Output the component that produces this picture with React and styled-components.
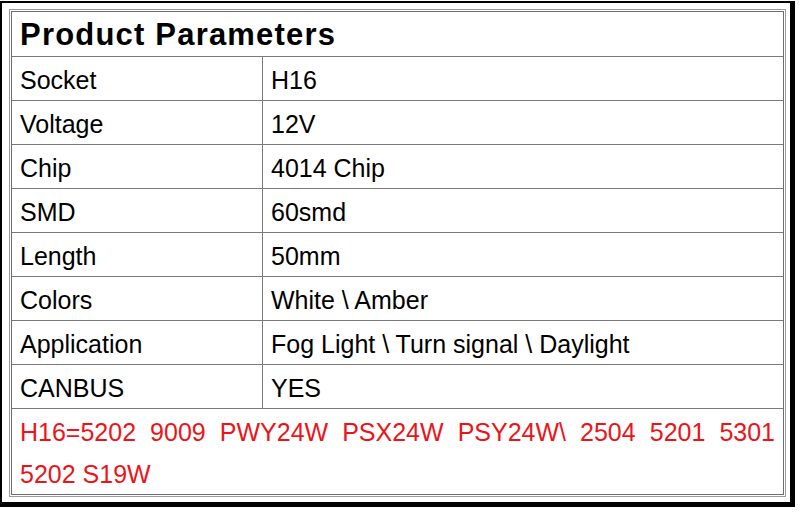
import React from 'react';
import styled, { createGlobalStyle } from 'styled-components';

const GlobalStyle = createGlobalStyle`
  html, body {
    margin: 0;
    padding: 0;
    background: #ffffff;
  }
  body {
    font-family: "Liberation Sans", Arial, sans-serif;
  }
`;

const Frame = styled.div`
  box-sizing: border-box;
  width: 795px;
  height: 506px;
  margin-top: 1px;
  background: #ffffff;
  border-style: solid;
  border-color: #000000;
  border-width: 2px 5px 5px 2px;
  padding: 6px 4px 5px 7px;
`;

const Table = styled.div`
  box-sizing: border-box;
  height: 100%;
  border: 1px solid #9a9a9a;
  padding: 1px;
`;

const Grid = styled.div`
  box-sizing: border-box;
  height: 100%;
  border: 1px solid #6e6e6e;
  display: grid;
  grid-template-columns: 251px 1fr;
  grid-template-rows: 45px repeat(8, 44px) 1fr;
`;

const TitleCell = styled.div`
  grid-column: 1 / -1;
  box-sizing: border-box;
  border-bottom: 1px solid #7a7a7a;
  display: flex;
  align-items: center;
  padding: 2px 8px 0;
  font-size: 31px;
  font-weight: bold;
  letter-spacing: 1.2px;
  color: #000000;
`;

const Cell = styled.div`
  box-sizing: border-box;
  border-bottom: 1px solid #7a7a7a;
  border-right: ${(p) => (p.$label ? '1px solid #7a7a7a' : 'none')};
  display: flex;
  align-items: center;
  padding: 3px 8px 0 8px;
  font-size: 25px;
  color: #000000;
  white-space: nowrap;
`;

const NoteCell = styled.div`
  grid-column: 1 / -1;
  box-sizing: border-box;
  padding: 2px 8px 0 8px;
  font-size: 25px;
  line-height: 42px;
  color: #ec1419;
  text-align: justify;
`;

const params = [
  ['Socket', 'H16'],
  ['Voltage', '12V'],
  ['Chip', '4014 Chip'],
  ['SMD', '60smd'],
  ['Length', '50mm'],
  ['Colors', 'White \\ Amber'],
  ['Application', 'Fog Light \\ Turn signal \\ Daylight'],
  ['CANBUS', 'YES'],
];

export default function App() {
  return (
    <>
      <GlobalStyle />
      <Frame>
        <Table>
          <Grid>
            <TitleCell>Product Parameters</TitleCell>
            {params.map(([label, value]) => (
              <React.Fragment key={label}>
                <Cell $label>{label}</Cell>
                <Cell>{value}</Cell>
              </React.Fragment>
            ))}
            <NoteCell>
              H16=5202 9009 PWY24W PSX24W PSY24W\ 2504 5201 5301 5202 S19W
            </NoteCell>
          </Grid>
        </Table>
      </Frame>
    </>
  );
}
